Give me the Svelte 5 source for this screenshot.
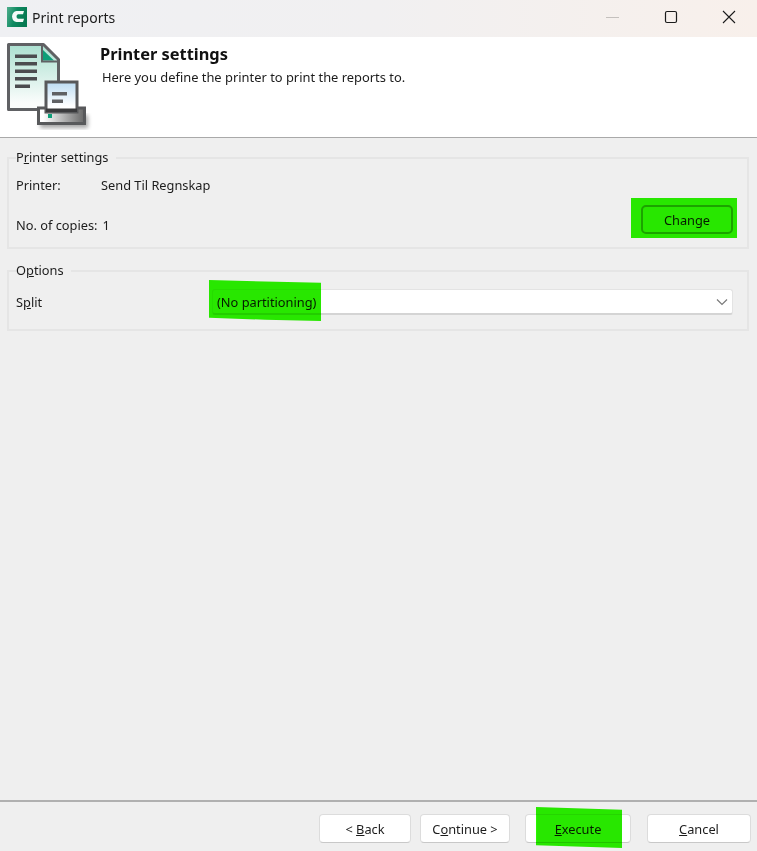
<script lang="ts">
    const navButtons = [
        { before: "< ", key: "B", after: "ack", cls: "back" },
        { before: "C", key: "o", after: "ntinue >", cls: "next" },
        { before: "", key: "E", after: "xecute", cls: "exec" },
        { before: "", key: "C", after: "ancel", cls: "cancel" },
    ];
</script>

<div class="window">
    <header class="titlebar">
        <svg class="app-icon" width="20" height="20" viewBox="0 0 20 20">
            <defs>
                <linearGradient id="appg" x1="0" y1="0" x2="1" y2="0.3">
                    <stop offset="0" stop-color="#4fae8d" />
                    <stop offset="0.5" stop-color="#0f8a61" />
                    <stop offset="1" stop-color="#067a52" />
                </linearGradient>
                <filter id="soft"><feGaussianBlur stdDeviation="0.5" /></filter>
            </defs>
            <rect width="20" height="20" fill="url(#appg)" />
            <path d="M17 4H9.500Q5.500 4.500 5 9.500Q5.500 14.500 9.500 15H16L17 11.800H11Q9.500 11.500 9.500 9.500Q9.500 7.500 11 7.200H16Z" fill="#f4fbf8" filter="url(#soft)" />
        </svg>
        <span class="title">Print reports</span>
        <div class="controls">
            <svg width="14" height="14" viewBox="0 0 14 14" class="min"><path d="M0 7.5H13" stroke="#c4c0bd" fill="none" /></svg>
            <svg width="14" height="14" viewBox="0 0 14 14" class="max"><rect x="1.5" y="1.5" width="11" height="11" rx="1.5" stroke="#1b1b1b" stroke-width="1.2" fill="none" /></svg>
            <svg width="14" height="14" viewBox="0 0 14 14" class="close"><path d="M1 1L13 13M13 1L1 13" stroke="#1b1b1b" stroke-width="1.1" fill="none" /></svg>
        </div>
    </header>

    <section class="banner">
        <svg class="banner-icon" width="100" height="100" viewBox="0 2 100 100">
            <defs>
                <linearGradient id="docg" x1="0" y1="0" x2="0" y2="1">
                    <stop offset="0" stop-color="#abe0d0" />
                    <stop offset="0.9" stop-color="#fbfdfc" />
                </linearGradient>
                <linearGradient id="paperg" x1="0" y1="0" x2="0" y2="1">
                    <stop offset="0" stop-color="#bcdcf3" />
                    <stop offset="0.8" stop-color="#fff" />
                </linearGradient>
                <linearGradient id="baseg" x1="0" y1="0" x2="1" y2="0">
                    <stop offset="0.1" stop-color="#fff" />
                    <stop offset="1" stop-color="#666" />
                </linearGradient>
                <filter id="blur"><feGaussianBlur stdDeviation="2" /></filter>
            </defs>
            <path d="M8.5 9.500H43.500L58.500 24.500V74.500H8.500Z" fill="url(#docg)" stroke="#606164" stroke-width="3" stroke-linejoin="round" />
            <path d="M43 15L54 25.500H43Z" fill="#0e9e78" />
            <path d="M42 10V26.500H58" fill="none" stroke="#606164" stroke-width="2" />
            <g fill="#4b4c4f">
                <rect x="15" y="19.500" width="22" height="3.500" />
                <rect x="15" y="27" width="22" height="3.500" />
                <rect x="15" y="34.500" width="22" height="3.500" />
                <rect x="15" y="42" width="22" height="3.500" />
                <rect x="15" y="49.500" width="15" height="3.500" />
            </g>
            <rect x="40" y="80" width="48" height="13" fill="#000" opacity="0.35" filter="url(#blur)" />
            <rect x="38.500" y="73" width="46" height="15.500" fill="url(#baseg)" stroke="#58595b" stroke-width="3" />
            <rect x="48" y="79" width="4" height="4" fill="#0e9e78" />
            <rect x="46" y="47" width="31" height="30" fill="url(#paperg)" stroke="#58595b" stroke-width="3" />
            <rect x="46" y="73.500" width="31" height="3.500" fill="#3a3a3c" />
            <rect x="52" y="57" width="15" height="3.500" fill="#606164" />
            <rect x="52" y="64.500" width="11" height="3.500" fill="#606164" />
        </svg>
        <div class="banner-text">
            <h1>Printer settings</h1>
            <p>Here you define the printer to print the reports to.</p>
        </div>
    </section>

    <main class="content">
        <fieldset class="group printer">
            <legend>P<u>r</u>inter settings</legend>
            <div class="row first">
                <span class="label">Printer:</span>
                <span>Send Til Regnskap</span>
            </div>
            <div class="row copies">
                <span class="copies-label">No. of copies:</span>
                <span>1</span>
                <button class="btn change">Change</button>
            </div>
        </fieldset>

        <fieldset class="group options">
            <legend>O<u>p</u>tions</legend>
            <div class="row split">
                <span class="split-label">S<u>p</u>lit</span>
                <div class="combo">
                    <span>(No partitioning)</span>
                    <svg width="12" height="8" viewBox="0 0 12 8"><path d="M1 1.500L6 6.500L11 1.500" stroke="#7a7a7a" stroke-width="1.200" fill="none" /></svg>
                </div>
            </div>
        </fieldset>
    </main>

    <footer class="footer">
        {#each navButtons as b}
            <button class="btn {b.cls}">{b.before}<u>{b.key}</u>{b.after}</button>
        {/each}
    </footer>

    <!-- marker scribbles over the screenshot -->
    <div class="mark mark-change"></div>
    <div class="mark mark-split"></div>
    <div class="mark mark-exec"></div>
</div>

<style>
    :global(body) {
        margin: 0;
        background: #efefef;
    }

    .window {
        position: relative;
        width: 757px;
        height: 851px;
        display: flex;
        flex-direction: column;
        overflow: hidden;
        background: #efefef;
        color: #1c1c1c;
        font-family: "Noto Sans", "Open Sans", sans-serif;
        font-size: 12.8px;
    }

    .titlebar {
        height: 37px;
        flex: none;
        box-sizing: border-box;
        padding: 0 0 3px 7px;
        display: flex;
        align-items: center;
        background: linear-gradient(90deg, #eff0f3 0%, #f1f0f1 50%, #f8f0eb 100%);
    }

    .app-icon {
        margin-right: 5px;
    }

    .title {
        font-size: 14px;
    }

    .controls {
        margin-left: auto;
        display: flex;
        align-items: center;
        padding-right: 21px;
        gap: 44px;
    }

    .banner {
        height: 100px;
        flex: none;
        display: flex;
        background: #fff;
        border-bottom: 1px solid #a9a9a9;
    }

    .banner-text {
        padding-top: 6px;
    }

    .banner-text h1 {
        margin: 0;
        font-size: 16.4px;
        font-weight: 700;
        line-height: 21px;
        color: #111;
    }

    .banner-text p {
        margin: 5px 0 0 2px;
        font-size: 12.9px;
        line-height: 17px;
    }

    .content {
        flex: 1;
        padding: 11px 8px 0 7px;
        display: flex;
        flex-direction: column;
        gap: 13px;
    }

    .group {
        margin: 0;
        padding: 0 8px 0 7px;
        border: 2px solid #e5e5e5;
        min-width: 0;
    }

    .group legend {
        padding: 0 7px 0 0;
        line-height: 17px;
    }

    .row {
        display: flex;
        align-items: flex-end;
    }

    .first {
        margin-top: 11px;
        line-height: 17px;
    }

    .printer .label {
        width: 85px;
    }

    .copies {
        margin-top: 11px;
        margin-bottom: 13px;
    }

    .copies-label {
        margin-right: 5px;
    }

    .split {
        margin-top: 10px;
        margin-bottom: 14px;
        align-items: center;
    }

    .split-label {
        width: 196px;
    }

    .combo {
        flex: 1;
        height: 26px;
        box-sizing: border-box;
        margin-right: 6px;
        display: flex;
        align-items: center;
        justify-content: space-between;
        padding: 0 4px 0 4px;
        /* the marker runs over the left end, so that part reads flat */
        background: linear-gradient(90deg, #efefef 108px, #fff 108px);
        border: 1px solid #e3e3e3;
        border-bottom: 2px solid #d4d4d4;
        border-radius: 3px;
    }

    .btn {
        height: 29px;
        box-sizing: border-box;
        padding: 0;
        background: #fff;
        border: 1px solid #dcdcdc;
        border-bottom-color: #c8c8c8;
        border-radius: 4px;
        font: inherit;
        color: #1c1c1c;
    }

    .change {
        width: 92px;
        margin-left: auto;
        margin-right: 6px;
        background: #efefef;
        border: 2px solid #a8a8a8;
        border-radius: 5px;
    }

    .footer {
        height: 51px;
        flex: none;
        box-sizing: border-box;
        border-top: 2px solid #b0b0b0;
        display: flex;
        justify-content: flex-end;
        padding: 12px 6px 0 0;
    }

    .back {
        width: 92px;
    }

    .next {
        width: 90px;
        margin-left: 9px;
    }

    .exec {
        width: 106px;
        margin-left: 15px;
        background: linear-gradient(90deg, #fff 11px, #efefef 11px, #efefef 96px, #fff 96px);
    }

    .cancel {
        width: 104px;
        margin-left: 16px;
    }

    .mark {
        position: absolute;
        background: #2af700;
        mix-blend-mode: multiply;
    }

    .mark-change {
        left: 631px;
        top: 198px;
        width: 106px;
        height: 40px;
    }

    .mark-split {
        left: 209px;
        top: 280px;
        width: 112px;
        height: 41px;
        clip-path: polygon(0 0, 100% 7%, 100% 100%, 50% 97%, 0 92%);
    }

    .mark-exec {
        left: 536px;
        top: 807px;
        width: 86px;
        height: 41px;
        clip-path: polygon(0 0, 100% 7%, 100% 100%, 0 93%);
    }
</style>
